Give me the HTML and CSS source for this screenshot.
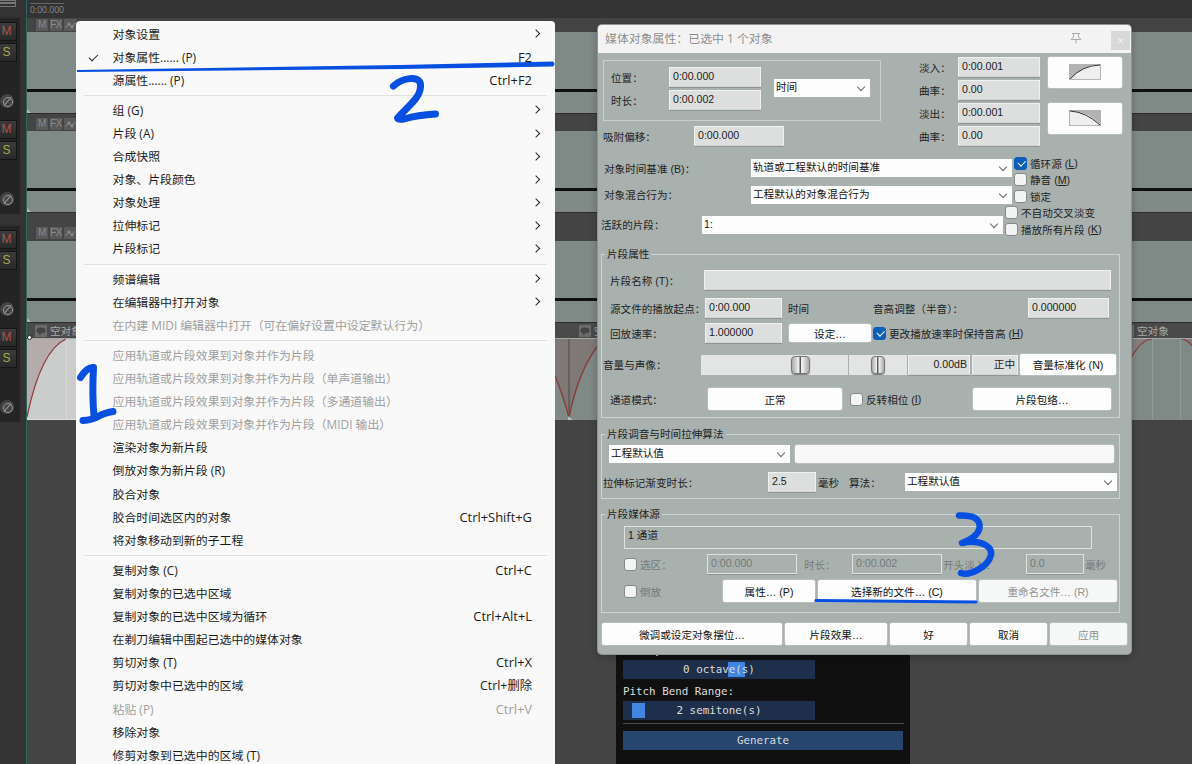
FILE: index.html
```html
<!DOCTYPE html>
<html lang="zh-CN">
<head>
  <meta charset="UTF-8">
  <title>媒体对象属性</title>
  <link rel="stylesheet" href="styles.css">
</head>
<body>
  <div class="workspace">
    <aside class="track-panel">
      <div class="panel-top"><i></i><i></i></div>
      <div class="track-ctl"><b class="mute">M</b><b class="solo">S</b><span class="phase"></span></div>
      <div class="track-ctl second"><b class="mute">M</b><b class="solo">S</b><span class="phase"></span></div>
      <div class="track-ctl"><b class="mute">M</b><b class="solo">S</b><span class="phase"></span></div>
      <div class="track-ctl"><b class="mute">M</b><b class="solo">S</b><span class="phase"></span></div>
    </aside>
    <main class="arrange">
      <div class="ruler"><span>0:00.000</span></div>
      <div class="item-head first"><i>M</i><i>FX</i><i><svg width="12" height="12"><path d="M1 9L5 5L8 8L11 4M4 4h2v2h-2zM7 7h2v2h-2z"/></svg></i></div>
      <div class="item"></div>
      <div class="item-head"><i>M</i><i>FX</i><i><svg width="12" height="12"><path d="M1 9L5 5L8 8L11 4M4 4h2v2h-2zM7 7h2v2h-2z"/></svg></i></div>
      <div class="item"></div>
      <div class="item-head tall"><i>M</i><i>FX</i><i><svg width="12" height="12"><path d="M1 9L5 5L8 8L11 4M4 4h2v2h-2zM7 7h2v2h-2z"/></svg></i></div>
      <div class="item"></div>
      <div class="item-head named">
        <div class="item-name n1"><svg width="12" height="12"><path d="M6 2.500c3 0 4.500 1.200 4.500 3S9 8.500 6 8.500L4 10.500V8.200C2 7.700 1.500 6.500 1.500 5.500c0-1.800 1.500-3 4.500-3z"/></svg>空对象</div>
        <div class="item-name n2"><svg width="12" height="12"><path d="M6 2.500c3 0 4.500 1.200 4.500 3S9 8.500 6 8.500L4 10.500V8.200C2 7.700 1.500 6.500 1.500 5.500c0-1.800 1.500-3 4.500-3z"/></svg>空</div>
        <div class="item-name n3"><svg width="12" height="12"></svg>空对象</div>
      </div>
      <svg class="fades" width="1165" height="82" viewBox="27 338 1165 82">
        <rect x="27" y="337" width="528" height="83" fill="#cbcdcc"/>
        <rect x="555" y="337" width="637" height="83" fill="#7f8986"/>
        <path d="M27 337V417Q41 350 66 339V337z" fill="#b5abaa"/>
        <path d="M27 417Q41 350 66 339" class="curve"/>
        <path d="M66.500 338V420" stroke="#d8dad9"/>
        <path d="M555 337V377L569 419Q580 370 600 342V337z" fill="#7e7876"/>
        <path d="M569 337V419" stroke="#5e5a58" stroke-width="1.500"/>
        <path d="M555 376Q564 397 569 418Q578 370 600 343" class="curve"/>
        <path d="M568 420v-4l5 4z" fill="#b9bdbb"/>
        <path d="M1125 337V372Q1137 340 1152 339V337zM1180 337Q1187 339 1192 346V337z" fill="#83807d"/>
        <path d="M1152.500 338V420M1180.500 338V420" stroke="#929a97"/>
        <path d="M1125 372Q1137 340 1152 339M1180 338.500Q1187 339.500 1192 345.500" class="curve"/>
        <path d="M27 338.500H1192" stroke="#a5a9a7"/>
        <path d="M27 419.500H555" stroke="#e0e2e1"/>
      </svg>
    </main>
    <span class="node"></span>
  </div>

  <section class="synth">
    <p class="cut"></p>
    <div class="slider"><i class="grab mid"></i><span>0 octave(s)</span></div>
    <p>Pitch Bend Range:</p>
    <div class="slider"><i class="grab"></i><span>2 semitone(s)</span></div>
    <hr>
    <button>Generate</button>
  </section>

  <nav class="menu">
    <div class="mi sub">对象设置</div>
    <div class="mi checked">对象属性...... (P)<kbd>F2</kbd></div>
    <div class="mi">源属性...... (P)<kbd>Ctrl+F2</kbd></div>
    <div class="sep"></div>
    <div class="mi sub">组 (G)</div>
    <div class="mi sub">片段 (A)</div>
    <div class="mi sub">合成快照</div>
    <div class="mi sub">对象、片段颜色</div>
    <div class="mi sub">对象处理</div>
    <div class="mi sub">拉伸标记</div>
    <div class="mi sub">片段标记</div>
    <div class="sep"></div>
    <div class="mi sub">频谱编辑</div>
    <div class="mi sub">在编辑器中打开对象</div>
    <div class="mi off">在内建 MIDI 编辑器中打开（可在偏好设置中设定默认行为）</div>
    <div class="sep"></div>
    <div class="mi off">应用轨道或片段效果到对象并作为片段</div>
    <div class="mi off">应用轨道或片段效果到对象并作为片段（单声道输出）</div>
    <div class="mi off">应用轨道或片段效果到对象并作为片段（多通道输出）</div>
    <div class="mi off">应用轨道或片段效果到对象并作为片段（MIDI 输出）</div>
    <div class="mi">渲染对象为新片段</div>
    <div class="mi">倒放对象为新片段 (R)</div>
    <div class="mi">胶合对象</div>
    <div class="mi">胶合时间选区内的对象<kbd>Ctrl+Shift+G</kbd></div>
    <div class="mi">将对象移动到新的子工程</div>
    <div class="sep"></div>
    <div class="mi">复制对象 (C)<kbd>Ctrl+C</kbd></div>
    <div class="mi">复制对象的已选中区域</div>
    <div class="mi">复制对象的已选中区域为循环<kbd>Ctrl+Alt+L</kbd></div>
    <div class="mi">在剃刀编辑中围起已选中的媒体对象</div>
    <div class="mi">剪切对象 (T)<kbd>Ctrl+X</kbd></div>
    <div class="mi">剪切对象中已选中的区域<kbd class="cjk">Ctrl+删除</kbd></div>
    <div class="mi off">粘贴 (P)<kbd>Ctrl+V</kbd></div>
    <div class="mi">移除对象</div>
    <div class="mi">修剪对象到已选中的区域 (T)</div>
  </nav>

  <section class="dialog">
    <header class="titlebar">
      <h1>媒体对象属性：已选中 1 个对象</h1>
      <svg class="pin" width="12" height="12"><path d="M2 1.500H10M3.500 1.500V5L1 7.500H11L8.500 5V1.500M6 7.500V11.500"/></svg>
      <span class="close">×</span>
    </header>

    <div class="top">
      <div class="top-left">
        <div class="timebox">
          <div class="stack">
            <div class="row"><label>位置：</label><span class="input">0:00.000</span></div>
            <div class="row"><label>时长：</label><span class="input">0:00.002</span></div>
          </div>
          <span class="select unit">时间</span>
        </div>
        <div class="row snap"><label>吸附偏移：</label><span class="input">0:00.000</span></div>
      </div>
      <div class="fade-values">
        <div class="row"><label>淡入：</label><span class="input">0:00.001</span></div>
        <div class="row"><label>曲率：</label><span class="input">0.00</span></div>
        <div class="row"><label>淡出：</label><span class="input">0:00.001</span></div>
        <div class="row"><label>曲率：</label><span class="input">0.00</span></div>
      </div>
      <div class="fade-buttons">
        <span class="btn"><svg width="32" height="17"><rect x=".5" y=".5" width="31" height="15" fill="#efefef" stroke="#b5b5b5"/><path d="M0 0H31Q15 1 1 15H0z" fill="#b3b3b3"/><path d="M1 15Q13 1.500 31 1" fill="none" stroke="#333"/></svg></span>
        <span class="btn"><svg width="32" height="17"><rect x=".5" y=".5" width="31" height="15" fill="#efefef" stroke="#b5b5b5"/><path d="M1 0H32V15Q18 1 1 1z" fill="#b3b3b3"/><path d="M1 1Q17 2 31 15" fill="none" stroke="#333"/></svg></span>
      </div>
    </div>

    <div class="middle">
      <div class="combos">
        <div class="row"><label>对象时间基准 (B)：</label><span class="select">轨道或工程默认的时间基准</span></div>
        <div class="row"><label>对象混合行为：</label><span class="select">工程默认的对象混合行为</span></div>
        <div class="row take"><label>活跃的片段：</label><span class="select">1:</span></div>
      </div>
      <div class="checks">
        <div class="check on"><i></i>循环源 (<u>L</u>)</div>
        <div class="check"><i></i>静音 (<u>M</u>)</div>
        <div class="check"><i></i>锁定</div>
        <div class="check out"><i></i>不自动交叉淡变</div>
        <div class="check out"><i></i>播放所有片段 (<u>K</u>)</div>
      </div>
    </div>

    <fieldset class="g-take">
      <legend>片段属性</legend>
      <div class="row r-name"><label>片段名称 (T)：</label><span class="input"></span></div>
      <div class="row r-start"><label>源文件的播放起点：</label><span class="input">0:00.000</span><label class="unit-text">时间</label><label class="pitch">音高调整（半音）：</label><span class="input semis">0.000000</span></div>
      <div class="row r-rate"><label>回放速率：</label><span class="input">1.000000</span><span class="btn">设定…</span><div class="check on"><i></i>更改播放速率时保持音高 (<u>H</u>)</div></div>
      <div class="row r-vol"><label>音量与声像：</label><span class="fader"><i></i></span><span class="fader pan"><i></i></span><span class="input db">0.00dB</span><span class="input center">正中</span><span class="btn">音量标准化 (N)</span></div>
      <div class="row r-chan"><label>通道模式：</label><span class="btn mode">正常</span><div class="check"><i></i>反转相位 (<u>I</u>)</div><span class="btn env">片段包络…</span></div>
    </fieldset>

    <fieldset class="g-pitch">
      <legend>片段调音与时间拉伸算法</legend>
      <div class="row r-algo"><span class="select">工程默认值</span><span class="btn"></span></div>
      <div class="row r-stretch"><label>拉伸标记渐变时长：</label><span class="input">2.5</span><label class="ms">毫秒</label><label class="algo">算法：</label><span class="select">工程默认值</span></div>
    </fieldset>

    <fieldset class="g-source">
      <legend>片段媒体源</legend>
      <div class="channels">1 通道</div>
      <div class="row r-section"><div class="check"><i></i>选区：</div><span class="input">0:00.000</span><label class="len">时长：</label><span class="input">0:00.002</span><label class="fadein">开头淡入：</label><span class="input short">0.0</span><label>毫秒</label></div>
      <div class="row r-files"><div class="check"><i></i>倒放</div><span class="btn props">属性… (P)</span><span class="btn choose">选择新的文件… (C)</span><span class="btn rename off">重命名文件… (R)</span></div>
    </fieldset>

    <footer class="actions">
      <span class="btn a1">微调或设定对象摆位…</span>
      <span class="btn a2">片段效果…</span>
      <span class="btn">好</span>
      <span class="btn">取消</span>
      <span class="btn off">应用</span>
    </footer>
  </section>

  <svg class="marks" width="1192" height="764">
    <path d="M77 70L400 65L553 61.500Q556 64 553 66.500L400 69L77 72z" class="solid"/>
    <path d="M393.500 86C402 78 419 75 420.500 84C422 97 408 106 397.500 118Q398 120 404 119Q418 115 435.500 114" stroke-width="7"/>
    <path d="M80.500 377.500Q87 367 93.500 367.500Q92 394 94 416M83 420.500Q92 420 98 416.500T113 411.500" stroke-width="7"/>
    <path d="M959 515.500C972 515 981 518 979.500 528C978 536 970 540 962 543C977 539 993 545 991 555C988 567 970 576 961 573" stroke-width="6.500"/>
    <path d="M816 600.500L976 602" stroke-width="3"/>
  </svg>
</body>
</html>
```

FILE: styles.css
```css
* {
  box-sizing: border-box;
}

body {
  margin: 0;
  width: 1192px;
  height: 764px;
  overflow: hidden;
  position: relative;
  background: #444;
  font-family: "Liberation Sans", "Noto Sans CJK SC", sans-serif;
  font-size: 10.6px;
  color: #222;
}

i, kbd {
  font-style: normal;
  font-family: inherit;
}

p {
  margin: 0;
}

/* arrange view */
.workspace {
  display: flex;
  height: 764px;
}

.track-panel {
  width: 27px;
  background: #333;
  border-right: 1px solid #2f665d;
}

.panel-top {
  height: 18px;
}

.panel-top i {
  display: block;
  width: 16px;
  height: 4px;
  border: 1px solid #777;
  border-left: 0;
}

.panel-top i:first-child {
  height: 3px;
}

.track-ctl {
  width: 20px;
  height: 98px;
  padding-top: 4px;
  background: #242424;
}

.track-ctl.second {
  margin-bottom: 12px;
}

.track-ctl b {
  display: block;
  width: 17px;
  height: 19px;
  margin-bottom: 2px;
  padding-right: 3px;
  background: linear-gradient(#3b3b3b, #292929);
  border: 1px solid #151515;
  border-left: 0;
  font: 12px/17px "Liberation Sans", sans-serif;
  text-align: center;
}

.track-ctl .mute {
  color: #b0524f;
}

.track-ctl .solo {
  color: #a5a84c;
}

.phase {
  display: block;
  position: relative;
  width: 14px;
  height: 14px;
  margin-top: 32px;
  background: #444;
  border-radius: 50%;
}

.phase::before {
  content: "";
  position: absolute;
  left: 3px;
  top: 3px;
  width: 8px;
  height: 8px;
  border: 1px solid #999;
  border-radius: 50%;
}

.phase::after {
  content: "";
  position: absolute;
  left: 1.500px;
  top: 6.500px;
  width: 11px;
  height: 1px;
  background: #999;
  transform: rotate(-48deg);
}

.arrange {
  width: 1165px;
}

.ruler {
  height: 18px;
  background: #333;
  padding: 3px 0 0 3px;
}

.ruler span {
  display: block;
  width: 34px;
  border-top: 1px solid #666;
  color: #8b8b8b;
  font: 8.6px/12px "Open Sans", sans-serif;
}

.item-head {
  display: flex;
  align-items: flex-end;
  gap: 2px;
  height: 17px;
  padding: 0 0 1px 9px;
}

.item-head.first {
  height: 14px;
}

.item-head.tall {
  height: 28px;
  padding-bottom: 2px;
}

.item-head i {
  width: 12px;
  height: 12px;
  background: #595959;
  color: #8a8a8a;
  font-size: 10px;
  line-height: 12px;
  text-align: center;
  letter-spacing: -.500px;
}

.item-head i svg {
  display: block;
  fill: none;
  stroke: #8a8a8a;
}

.item {
  height: 82px;
  background: linear-gradient(#7f8986 57px, #0d100f 57px, #0d100f 60px, #7f8986 60px, #7f8986 81px, #2c2c2c 81px);
  position: relative;
}

.item::after {
  content: "";
  position: absolute;
  left: 0;
  bottom: 1px;
  border: 2.500px solid transparent;
  border-left-color: #b5bab8;
  border-bottom-color: #b5bab8;
}

.item-head.named {
  height: 15px;
  background: #4a4a4a;
  padding: 0 0 0 8px;
  gap: 0;
}

.item-name {
  display: flex;
  align-items: center;
  gap: 3px;
  height: 15px;
  color: #aaa;
  white-space: nowrap;
}

.item-name svg {
  background: #6b6b6b;
  fill: #444;
}

.n1 {
  width: 544px;
}

.n2 {
  width: 543px;
}

.fades {
  display: block;
}

.curve {
  fill: none;
  stroke: #8b3a37;
  stroke-width: 1.200;
}

/* fade handle on the selected item */
.node {
  position: absolute;
  left: 27px;
  top: 335px;
  width: 5px;
  height: 5px;
  border: 1px solid #222;
  border-radius: 50%;
  background: #fff;
}

/* context menu */
.menu {
  position: absolute;
  left: 76px;
  top: 20.500px;
  width: 479px;
  height: 760px;
  padding-top: 2px;
  background: #f9f9f9;
  border-radius: 4px;
  color: #1b1b1b;
  font: 11.900px "Open Sans", "Noto Sans CJK SC", sans-serif;
}

.mi {
  display: flex;
  position: relative;
  justify-content: space-between;
  height: 23.100px;
  padding: 0 23px 0 36.500px;
  line-height: 23.100px;
  white-space: nowrap;
}

.mi.off {
  color: #a0a0a0;
}

.mi kbd {
  font-size: 12.900px;
}

.mi .cjk {
  font-size: 12.300px;
}

.sub::after {
  content: "";
  align-self: center;
  width: 5px;
  height: 5px;
  border: solid #222;
  border-width: 1px 1px 0 0;
  transform: translate(8px, -.500px) rotate(45deg);
  margin-right: 1px;
}

.checked::before {
  content: "";
  position: absolute;
  left: 13px;
  top: 8px;
  width: 8px;
  height: 4px;
  border: solid #222;
  border-width: 0 0 1px 1px;
  transform: rotate(-45deg);
}

.sep {
  height: 1px;
  margin: 3px 8px 3.100px;
  background: #dfe1e1;
}

/* item properties dialog */
.dialog {
  position: absolute;
  left: 598px;
  top: 25px;
  width: 533px;
  height: 629px;
  background: #a9b1af;
  border-radius: 4px;
  box-shadow: 0 0 0 1px #8d9492, 0 2px 8px rgba(0, 0, 0, .3);
  overflow: hidden;
}

.titlebar {
  display: flex;
  height: 28px;
  background: #f3f3f3;
  color: #8e8e8e;
}

.titlebar h1 {
  width: 472px;
  margin: 0;
  padding-left: 7px;
  font: 11.900px/27px "Open Sans", "Noto Sans CJK SC", sans-serif;
}

.pin {
  margin-top: 7px;
  fill: none;
  stroke: #aaa;
}

.close {
  width: 19px;
  height: 19px;
  margin: 6px 0 0 29px;
  background: #d8d8d8;
  color: #f5f5f5;
  font-size: 12px;
  line-height: 20px;
  text-align: center;
}

.row {
  display: flex;
  align-items: center;
  white-space: nowrap;
}

.row > * {
  flex: none;
}

.input {
  height: 20px;
  padding-left: 3px;
  background: #dcdfde;
  border: 1px solid #f0f2f1;
  border-bottom-color: #d0d5d3;
  box-shadow: 0 1px 0 #8f9694;
  line-height: 17px;
}

.select {
  position: relative;
  height: 18px;
  padding-left: 2px;
  background: #fdfdfd;
  color: #111;
  line-height: 17px;
}

.select::after {
  content: "";
  position: absolute;
  right: 6px;
  top: 5px;
  width: 5px;
  height: 5px;
  border: solid #666;
  border-width: 0 1px 1px 0;
  transform: rotate(45deg);
}

.btn {
  display: flex;
  align-items: center;
  justify-content: center;
  height: 22px;
  background: #fdfdfd;
  border-radius: 2px;
  box-shadow: 0 0 0 .500px #c5cbc9;
  color: #111;
  white-space: nowrap;
}

.btn.off {
  background: #f6f7f7;
  color: #929292;
}

.check {
  display: flex;
  align-items: center;
  height: 16.500px;
  white-space: pre;
}

.check i {
  position: relative;
  width: 13px;
  height: 13px;
  margin-right: 3px;
  background: #f3f4f4;
  border: 1px solid #858988;
  border-radius: 3px;
}

.check.on i {
  background: #0a5fb8;
  border-color: #0a5fb8;
}

.check.on i::after {
  content: "";
  position: absolute;
  left: 2.500px;
  top: 2.500px;
  width: 6px;
  height: 3.500px;
  border: solid #fff;
  border-width: 0 0 1px 1px;
  transform: rotate(-45deg);
}

.top {
  display: flex;
  height: 100px;
  padding: 4px 0 0 5px;
}

.top-left {
  width: 316px;
}

.timebox {
  display: flex;
  width: 278px;
  height: 61px;
  margin-top: 3px;
  padding: 6px 0 0 7px;
  border: 1px solid #c9cfcd;
}

.stack .row {
  height: 20px;
  margin-bottom: 3px;
}

.stack label {
  width: 58px;
}

.stack .input {
  width: 92px;
}

.unit {
  width: 96px;
  margin: 12px 0 0 13px;
}

.snap {
  margin-top: 5px;
}

.snap label {
  width: 91px;
}

.snap .input {
  width: 90px;
}

.fade-values .row {
  height: 20px;
  margin-bottom: 3px;
}

.fade-values label {
  width: 39px;
}

.fade-values .input {
  width: 82px;
}

.fade-buttons {
  display: flex;
  flex-direction: column;
  gap: 15px;
  margin-left: 8px;
}

.fade-buttons .btn {
  width: 74px;
  height: 31px;
}

.middle {
  display: flex;
  height: 94px;
}

.combos {
  width: 416px;
  padding-top: 6px;
}

.combos .row {
  height: 18px;
  margin-bottom: 8.500px;
  padding-left: 6px;
}

.combos label {
  width: 147px;
}

.combos .select {
  width: 261px;
}

.combos .row.take {
  padding-left: 3px;
  margin-top: 12px;
}

.combos .take label {
  width: 101px;
}

.combos .take .select {
  width: 301px;
}

.checks {
  padding-top: 2px;
}

.checks .out {
  margin-left: -9px;
}

fieldset {
  min-width: 0;
  width: 519px;
  margin: 0 0 0 3px;
  padding: 0;
  border: 1px solid #cdd3d1;
}

legend {
  height: 14px;
  margin-left: 3px;
  padding: 0 2px;
  line-height: 14px;
}

fieldset label {
  padding-left: 8px;
}

.g-take {
  height: 171px;
}

.r-name {
  height: 20px;
  margin-top: 9px;
}

.r-name label {
  width: 102px;
}

.r-name .input {
  width: 407px;
}

.r-start {
  height: 20px;
  margin-top: 8px;
}

.r-start label:first-child,
.r-rate label {
  width: 103px;
}

.r-start .input,
.r-rate .input {
  width: 77px;
}

.r-start .unit-text {
  width: 83px;
  padding-left: 6px;
}

.r-start .pitch {
  width: 163px;
}

.r-start .semis {
  width: 81px;
}

.r-rate {
  height: 20px;
  margin-top: 5px;
}

.r-rate .btn {
  width: 82px;
  height: 18px;
  margin: 0 2px 0 7px;
}

.r-vol {
  height: 21px;
  margin-top: 11px;
}

.r-vol label {
  width: 99px;
  padding-left: 1px;
}

.fader {
  width: 147px;
  height: 20px;
  padding: 1px 0 0 90px;
  margin-right: 1px;
  background: #e3e5e4;
}

.fader i {
  display: block;
  width: 19px;
  height: 18px;
  border: 1px solid #777;
  border-radius: 4px;
  background: linear-gradient(90deg, #aaa, #f4f4f4 42%, #555 46%, #555 52%, #f4f4f4 56%, #aaa);
  box-shadow: 0 1px 1px #777;
}

.fader.pan {
  width: 58px;
  padding-left: 22px;
}

.pan i {
  width: 14px;
}

.r-vol .input {
  text-align: right;
  padding-right: 2px;
  margin-right: 2px;
}

.r-vol .db {
  width: 62px;
}

.r-vol .center {
  width: 46px;
}

.r-vol .btn {
  width: 96px;
  height: 21px;
}

.r-chan {
  height: 22px;
  margin-top: 13px;
}

.r-chan label {
  width: 106px;
}

.mode {
  width: 134px;
  margin-right: 8px;
}

.r-chan .check {
  width: 123px;
}

.env {
  width: 138px;
}

.g-pitch {
  height: 72px;
  margin-top: 9px;
}

.r-algo {
  height: 18px;
  margin-top: 4px;
  padding-left: 7px;
}

.r-algo .select {
  width: 181px;
  margin-right: 5px;
}

.r-algo .btn {
  width: 319px;
  height: 18px;
  background: #f8f8f8;
}

.r-stretch {
  height: 20px;
  margin-top: 9px;
}

.r-stretch label:first-child {
  width: 166px;
  padding-left: 1px;
}

.r-stretch .input {
  width: 48px;
}

.r-stretch .ms {
  width: 33px;
  padding-left: 2px;
}

.r-stretch .algo {
  width: 56px;
  padding-left: 0;
}

.r-stretch .select {
  width: 212px;
}

.g-source {
  height: 106px;
  margin-top: 8px;
}

.channels {
  width: 468px;
  height: 23px;
  margin: 5px 0 0 22px;
  padding-left: 3px;
  border: 1px solid #dde1e0;
  line-height: 16px;
}

.r-section {
  height: 20px;
  margin-top: 5px;
  padding-left: 22px;
  color: #747b79;
}

.r-section .check {
  width: 83px;
}

.r-section .input {
  width: 90px;
  background: transparent;
  border-color: #dde1e0;
}

.r-section label {
  padding-left: 1px;
}

.r-section .len {
  width: 55px;
  padding-left: 7px;
}

.r-section .fadein {
  width: 84px;
}

.r-section .input.short {
  width: 58px;
}

.r-files {
  height: 22px;
  margin-top: 6px;
  padding-left: 22px;
}

.r-files .check {
  width: 99px;
  color: #747b79;
}

.props {
  width: 92px;
  margin-right: 3px;
}

.choose {
  width: 158px;
  margin-right: 3px;
}

.rename {
  width: 138px;
}

.actions {
  display: flex;
  gap: 3px;
  margin: 10px 0 0 4px;
}

.actions .btn {
  width: 77px;
}

.actions .a1 {
  width: 180px;
}

.actions .a2 {
  width: 102px;
}

/* synth generator window */
.synth {
  position: absolute;
  left: 616px;
  top: 645px;
  width: 294px;
  height: 119px;
  padding: 8px 7px 0;
  background: #101010;
  color: #ddd;
  font: 10.850px/19px "DejaVu Sans Mono", monospace;
}

.synth .cut {
  width: 2px;
  height: 3px;
  margin: 0 0 4px 33px;
  background: #bbb;
}

.slider {
  position: relative;
  width: 192px;
  height: 19px;
  background: #1d2f4a;
  text-align: center;
}

.slider + p {
  height: 22px;
  line-height: 26px;
}

.slider span {
  position: relative;
}

.grab {
  position: absolute;
  left: 9px;
  top: 2px;
  width: 13px;
  height: 15px;
  background: #4286e2;
}

.grab.mid {
  left: 105px;
  width: 17px;
}

.synth hr {
  width: 281px;
  height: 1px;
  margin: 3px 0 7px;
  border: 0;
  background: #4a4a4d;
}

.synth button {
  display: block;
  width: 280px;
  height: 19px;
  padding: 0;
  border: 0;
  background: #26466f;
  color: #ddd;
  font: inherit;
}

/* pen marks */
.marks {
  position: absolute;
  left: 0;
  top: 0;
  fill: none;
  stroke: #064fe0;
  stroke-linecap: round;
  stroke-linejoin: round;
}

.marks .solid {
  fill: #064fe0;
  stroke: none;
}
```
